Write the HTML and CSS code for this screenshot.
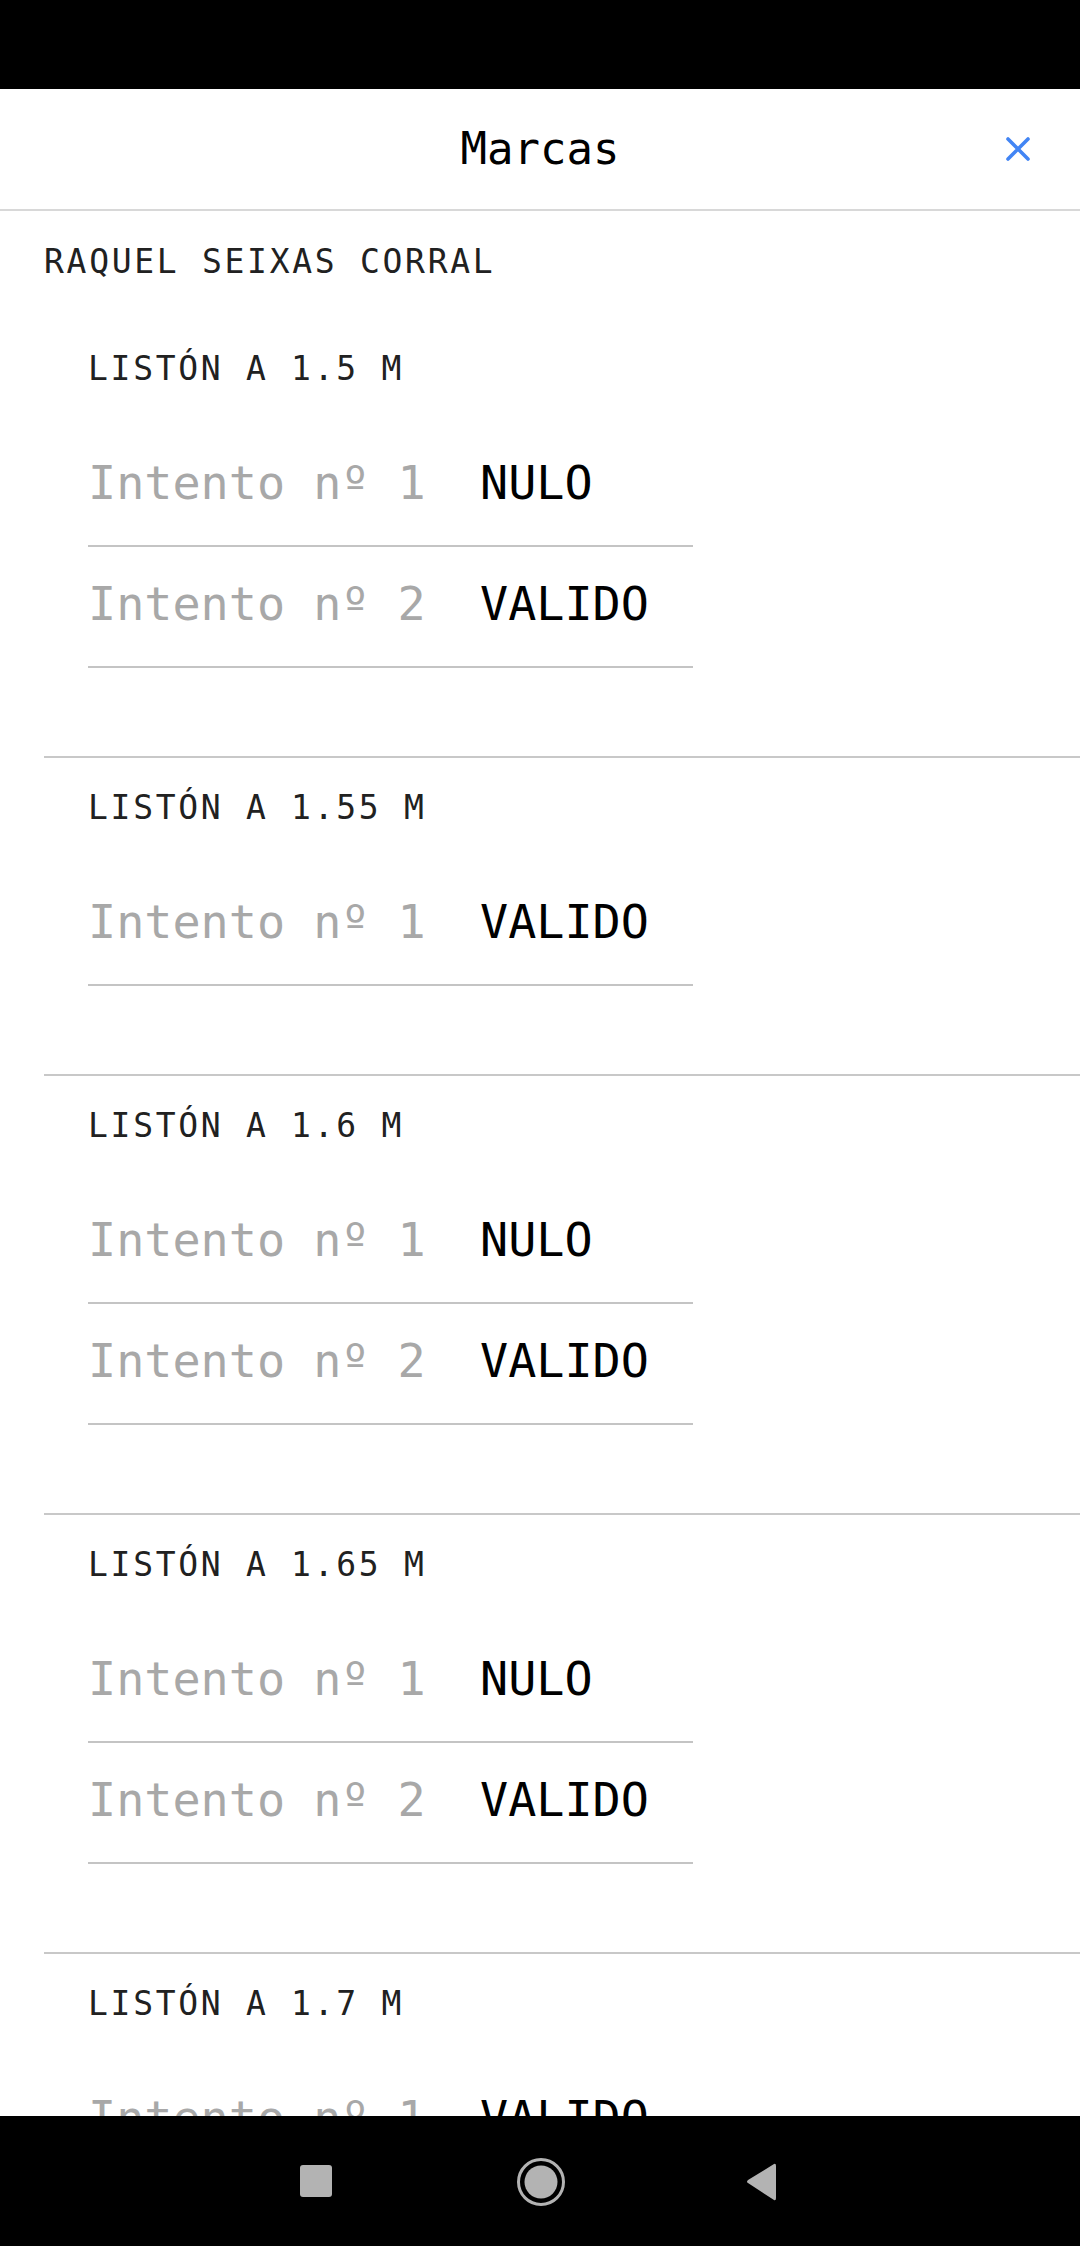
FILE: index.html
```html
<!DOCTYPE html>
<html lang="es">
<head>
<meta charset="utf-8">
<title>Marcas</title>
<link rel="stylesheet" href="styles.css">
</head>
<body>
<div class="screen">
  <div class="status-bar"></div>
  <header class="top-bar">
    <span class="spacer"></span>
    <h1 class="title">Marcas</h1>
    <button class="close" aria-label="Cerrar">
      <svg width="24" height="24" viewBox="0 0 24 24"><path d="M2 2 L22 22 M22 2 L2 22" stroke="#4285f4" stroke-width="3.6" stroke-linecap="round" fill="none"/></svg>
    </button>
  </header>
  <main class="content">
    <div class="athlete">RAQUEL SEIXAS CORRAL</div>
    <section class="bar-group first">
      <div class="bar-title">LISTÓN A 1.5 M</div>
      <div class="attempt"><span class="label">Intento nº 1</span><span class="value">NULO</span></div>
      <div class="attempt"><span class="label">Intento nº 2</span><span class="value">VALIDO</span></div>
    </section>
    <section class="bar-group">
      <div class="bar-title">LISTÓN A 1.55 M</div>
      <div class="attempt"><span class="label">Intento nº 1</span><span class="value">VALIDO</span></div>
    </section>
    <section class="bar-group">
      <div class="bar-title">LISTÓN A 1.6 M</div>
      <div class="attempt"><span class="label">Intento nº 1</span><span class="value">NULO</span></div>
      <div class="attempt"><span class="label">Intento nº 2</span><span class="value">VALIDO</span></div>
    </section>
    <section class="bar-group">
      <div class="bar-title">LISTÓN A 1.65 M</div>
      <div class="attempt"><span class="label">Intento nº 1</span><span class="value">NULO</span></div>
      <div class="attempt"><span class="label">Intento nº 2</span><span class="value">VALIDO</span></div>
    </section>
    <section class="bar-group">
      <div class="bar-title">LISTÓN A 1.7 M</div>
      <div class="attempt"><span class="label">Intento nº 1</span><span class="value">VALIDO</span></div>
    </section>
  </main>
  <nav class="nav-bar">
    <svg width="1080" height="130" viewBox="0 0 1080 130">
      <rect x="300" y="49" width="32" height="32" rx="3" fill="#b3b3b3"/>
      <circle cx="541" cy="66" r="22.5" fill="none" stroke="#b3b3b3" stroke-width="3"/>
      <circle cx="541" cy="66" r="16.5" fill="#b3b3b3"/>
      <path d="M774 48 Q776 47 776 50 L776 82 Q776 85 774 84 L748 67 Q746 66 748 64 Z" fill="#b3b3b3"/>
    </svg>
  </nav>
</div>
</body>
</html>
```

FILE: styles.css
```css
* { box-sizing: border-box; }

html, body {
  margin: 0;
  padding: 0;
  background: #ffffff;
}

body {
  font-family: "DejaVu Sans Mono", "Liberation Mono", monospace;
}

.screen {
  width: 1080px;
  height: 2246px;
  display: flex;
  flex-direction: column;
  overflow: hidden;
}

.status-bar {
  height: 89px;
  flex: none;
  background: #000;
}

.top-bar {
  flex: none;
  height: 122px;
  border-bottom: 2px solid #d8d8d8;
  display: grid;
  grid-template-columns: 1fr auto 1fr;
  align-items: center;
  padding: 0 50px;
}

.title {
  margin: 0;
  font-weight: normal;
  font-size: 44px;
  line-height: 50px;
  color: #000;
}

.close {
  justify-self: end;
  background: none;
  border: 0;
  padding: 0;
  width: 24px;
  height: 24px;
  display: flex;
}

.content {
  flex: 1;
  overflow: hidden;
}

.athlete {
  padding: 31px 0 35px 44px;
  font-size: 33px;
  line-height: 40px;
  letter-spacing: 2.7px;
  color: #212121;
}

.bar-group {
  margin-left: 44px;
  padding: 30px 0 88px 44px;
  border-top: 2px solid #c8c8c8;
}

.bar-group.first {
  border-top-color: transparent;
}

.bar-title {
  font-size: 33px;
  line-height: 40px;
  letter-spacing: 2.7px;
  color: #212121;
  margin-bottom: 37px;
}

.attempt {
  width: 605px;
  display: flex;
  padding: 32px 0 37px 0;
  border-bottom: 2px solid #c4c4c4;
  font-size: 46.75px;
  line-height: 50px;
}

.label {
  width: 392px;
  color: #a8a8a8;
}

.value {
  color: #000;
}

.nav-bar {
  flex: none;
  height: 130px;
  background: #000;
  display: flex;
}
```
